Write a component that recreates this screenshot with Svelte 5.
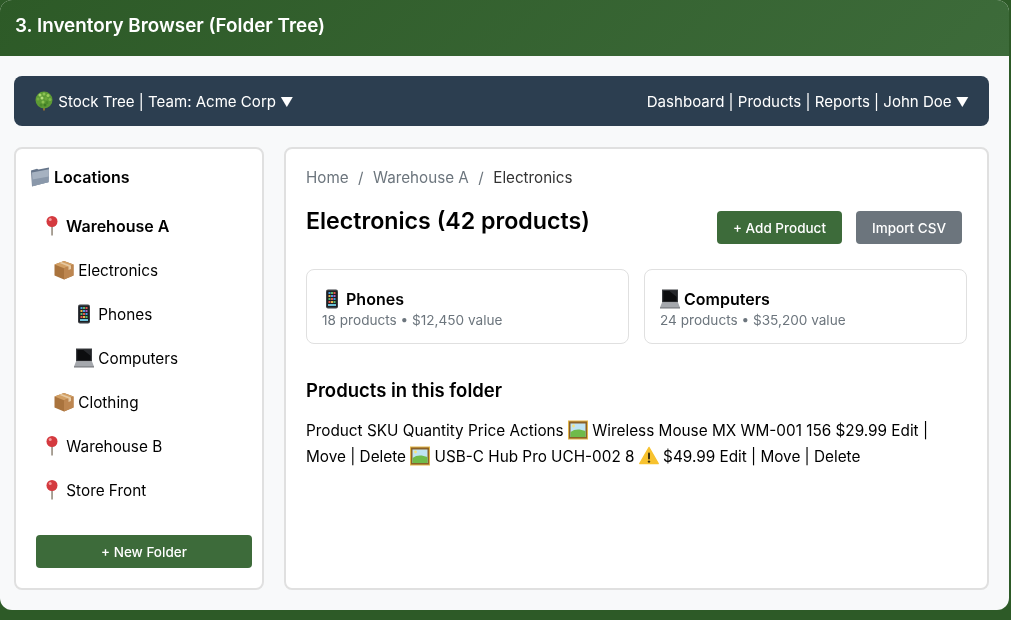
<script>
  const tree = [
    { name: "Warehouse A", icon: "pin", level: 0, active: true },
    { name: "Electronics", icon: "box", level: 1 },
    { name: "Phones", icon: "phone", level: 2 },
    { name: "Computers", icon: "laptop", level: 2 },
    { name: "Clothing", icon: "box", level: 1 },
    { name: "Warehouse B", icon: "pin", level: 0 },
    { name: "Store Front", icon: "pin", level: 0 },
  ];
  const folders = [
    { name: "Phones", icon: "phone", meta: "18 products • $12,450 value" },
    { name: "Computers", icon: "laptop", meta: "24 products • $35,200 value" },
  ];
  const leaves = [
    [6, 4, "#a6d468"], [10, 3, "#8cc152"], [14, 4.5, "#9bcb5c"], [4, 8, "#76b041"], [8, 7, "#b4dc7a"],
    [12, 7.5, "#6fa83d"], [16, 8.5, "#7fb84a"], [5, 11.5, "#5d9a35"], [9, 11, "#8cc152"], [13, 11.5, "#4c8a2b"],
    [16, 11.5, "#5d9a35"], [7, 14, "#4c8a2b"], [11, 14, "#3f7a24"],
  ];
  const apps = [
    [6.5, 3, "#4a9be0"], [9, 3, "#59b96a"], [11.5, 3, "#e2574c"],
    [6.5, 6, "#e9b44c"], [9, 6, "#4a9be0"], [11.5, 6, "#b05fc4"],
    [6.5, 9, "#59b96a"], [9, 9, "#e2574c"], [11.5, 9, "#4a9be0"],
    [6.5, 12, "#e2574c"], [9, 12, "#e9b44c"], [11.5, 12, "#59b96a"],
  ];
</script>

{#snippet emoji(name)}
  <svg class="emoji" viewBox="0 0 20 20" aria-hidden="true">
    {#if name === "tree"}
      <rect x="9.2" y="14" width="1.6" height="5.5" fill="#a8752f" />
      <circle cx="10" cy="9" r="8.5" fill="#5d9a35" />
      {#each leaves as [cx, cy, fill]}
        <circle {cx} {cy} r="1.5" {fill} />
      {/each}
    {:else if name === "folder"}
      <path d="M1 3.5 L7 1.8 L8.5 2.6 L19 0.5 L18.5 15 L2 19.5 Z" fill="#66758a" />
      <path d="M2 5.5 L19 2.2 L18.5 15.2 L2.6 19 Z" fill="#a6b2c1" />
      <path d="M2.3 12.5 L18.8 9.5 L18.5 15.2 L2.6 19 Z" fill="#8a98aa" />
    {:else if name === "pin"}
      <rect x="9.3" y="9" width="1.5" height="10.5" fill="#8f8577" />
      <circle cx="10" cy="5.5" r="5.5" fill="#d43a3f" />
      <circle cx="8.2" cy="3.6" r="1.5" fill="#f59a9c" />
    {:else if name === "box"}
      <path d="M10 1 L19.5 4.5 L19.5 15.5 L10 19.5 L0.5 15.5 L0.5 4.5 Z" fill="#a9733d" />
      <path d="M0.5 4.5 L10 8.2 L19.5 4.5 L10 1 Z" fill="#d29f64" />
      <path d="M10 8.2 L19.5 4.5 L19.5 15.5 L10 19.5 Z" fill="#bd8650" />
      <path d="M5 2.8 L14.5 6.4 L14.5 10 L17 9 L17 5.4 L7.5 1.9 Z" fill="#e6c9a2" />
    {:else if name === "phone"}
      <rect x="4" y="0.5" width="12" height="19" rx="2" fill="#3a3d42" />
      <rect x="5" y="2" width="10" height="16" fill="#1d2025" />
      {#each apps as [x, y, fill]}
        <rect {x} {y} width="2" height="2" {fill} />
      {/each}
      <rect x="6" y="15" width="8" height="2" fill="#6cc0d8" />
    {:else if name === "laptop"}
      <path d="M2 0.5 H18 V13.5 H2 Z" fill="#3a3c40" />
      <path d="M3.2 1.8 H16.8 V12.5 H3.2 Z" fill="#0c0d0f" />
      <path d="M9 1.8 H16.8 V8 Z" fill="#26282c" />
      <path d="M2 13.5 H18 L20 18.5 H0 Z" fill="#a5a8ad" />
      <rect x="0" y="18.2" width="20" height="1.3" fill="#74777c" />
    {:else if name === "picture"}
      <rect x="0" y="0.5" width="20" height="19" fill="#e2b64a" />
      <rect x="1" y="1.5" width="18" height="17" fill="#8a6128" />
      <rect x="2.5" y="3.5" width="15" height="13.5" fill="#bfe4f3" />
      <circle cx="5.5" cy="6" r="1.4" fill="#f8e27a" />
      <path d="M2.5 12 C7 8.5 12 9 17.5 11 V17 H2.5 Z" fill="#6fbb4a" />
    {:else if name === "warning"}
      <path d="M10 1.5 L19.2 17.5 H0.8 Z" fill="#f7c22f" stroke="#f7c22f" stroke-width="1.5" stroke-linejoin="round" />
      <rect x="9" y="6.5" width="2" height="7" rx="1" fill="#3a2f12" />
      <circle cx="10" cy="15.6" r="1.2" fill="#3a2f12" />
    {/if}
  </svg>
{/snippet}

<div class="page">
  <div class="shell">
    <header class="title-bar">3. Inventory Browser (Folder Tree)</header>

    <div class="panel">
      <nav class="navbar">
        <div>{@render emoji("tree")} Stock Tree | Team: Acme Corp <span class="caret">▼</span></div>
        <div>Dashboard | Products | Reports | John Doe <span class="caret">▼</span></div>
      </nav>

      <div class="columns">
        <aside class="sidebar">
          <h3 class="side-title">{@render emoji("folder")} Locations</h3>
          <ul class="tree">
            {#each tree as item}
              <li class="node level-{item.level}" class:active={item.active}>
                {@render emoji(item.icon)} {item.name}
              </li>
            {/each}
          </ul>
          <button class="btn new-folder">+ New Folder</button>
        </aside>

        <main class="content">
          <div class="crumbs">
            <span>Home</span><i>/</i><span>Warehouse A</span><i>/</i><b>Electronics</b>
          </div>

          <div class="heading">
            <h2>Electronics (42 products)</h2>
            <div class="actions">
              <button class="btn">+ Add Product</button>
              <button class="btn grey">Import CSV</button>
            </div>
          </div>

          <div class="cards">
            {#each folders as folder}
              <div class="card">
                <div class="card-name">{@render emoji(folder.icon)} {folder.name}</div>
                <div class="card-meta">{folder.meta}</div>
              </div>
            {/each}
          </div>

          <h3 class="section">Products in this folder</h3>
          <p class="flat">
            Product SKU Quantity Price Actions {@render emoji("picture")} Wireless Mouse MX WM-001 156 $29.99 Edit | Move | Delete {@render emoji("picture")} USB-C Hub Pro UCH-002 8 {@render emoji("warning")} $49.99 Edit | Move | Delete
          </p>
        </main>
      </div>
    </div>
  </div>
</div>

<style>
  :global(body) {
    font-family: Inter, "Liberation Sans", sans-serif;
    font-size: 15.3px;
    color: #000;
  }
  .page {
    height: 620px;
    overflow: hidden;
    background: #2d5a27;
  }
  .shell {
    width: 1009px;
    height: 610px;
    overflow: hidden;
    border-radius: 12px;
    background: #f8f9fa;
    will-change: transform;
  }
  .title-bar {
    height: 56px;
    box-sizing: border-box;
    padding: 14px 15px;
    background: linear-gradient(135deg, #2d5a27 0%, #3d6b3a 100%);
    color: #fff;
    font-size: 18.85px;
    font-weight: 600;
    line-height: 24px;
  }
  .panel {
    box-sizing: border-box;
    padding: 20px 20px 20px 14px;
  }
  .navbar {
    display: flex;
    justify-content: space-between;
    align-items: center;
    height: 50px;
    box-sizing: border-box;
    padding: 0 20px;
    background: #2c3e50;
    border-radius: 8px;
    color: #fff;
    font-size: 15.05px;
  }
  .caret {
    font-size: 13px;
  }
  .emoji {
    display: inline-block;
    width: 20px;
    height: 20px;
    vertical-align: -4px;
  }
  .columns {
    display: flex;
    gap: 20px;
    margin-top: 21px;
    height: 443px;
  }
  .sidebar {
    box-sizing: border-box;
    width: 250px;
    flex: none;
    padding: 14px;
    background: #fff;
    border: 2px solid #e0e0e0;
    border-radius: 8px;
  }
  .side-title {
    margin: 0;
    font-size: 16px;
    font-weight: 600;
    line-height: 28px;
    height: 42px;
  }
  .tree {
    list-style: none;
    margin: 0;
    padding: 0;
  }
  .node {
    height: 44px;
    line-height: 44px;
  }
  .level-0 {
    padding-left: 12px;
  }
  .level-1 {
    padding-left: 24px;
  }
  .level-2 {
    padding-left: 44px;
  }
  .active {
    font-size: 16px;
    font-weight: 600;
    line-height: 42px;
  }
  .btn {
    height: 33px;
    padding: 0 16px;
    border: none;
    border-radius: 4px;
    background: #3d6b3a;
    color: #fff;
    font: 500 13.5px Inter, "Liberation Sans", sans-serif;
  }
  .btn.grey {
    background: #6c757d;
  }
  .new-folder {
    display: block;
    width: 216px;
    margin: 22px 6px 0;
  }
  .content {
    flex: 1;
    box-sizing: border-box;
    padding: 19px 20px;
    background: #fff;
    border: 2px solid #e0e0e0;
    border-radius: 8px;
  }
  .crumbs {
    line-height: 20px;
    color: #6c757d;
    font-size: 15.2px;
  }
  .crumbs i {
    font-style: normal;
    margin: 0 9.5px;
  }
  .crumbs b {
    font-weight: 400;
    color: #333;
  }
  .heading {
    display: flex;
    justify-content: space-between;
    margin-top: 19px;
  }
  h2 {
    margin: 0;
    font-size: 23.2px;
    font-weight: 600;
    line-height: 28px;
  }
  .actions {
    display: flex;
    gap: 14px;
    margin: 4px 5px 0 0;
  }
  .cards {
    display: grid;
    grid-template-columns: 1fr 1fr;
    gap: 15px;
    margin-top: 25px;
  }
  .card {
    height: 75px;
    box-sizing: border-box;
    padding: 17px 15px 15px;
    border: 1px solid #e0e0e0;
    border-radius: 8px;
  }
  .card-name {
    font-size: 16px;
    font-weight: 600;
    line-height: 24px;
  }
  .card-meta {
    font-size: 13.6px;
    line-height: 18px;
    color: #6c757d;
  }
  .section {
    margin: 35px 0 0;
    font-size: 18.5px;
    font-weight: 600;
    line-height: 22px;
  }
  .flat {
    margin: 17px 0 0;
    line-height: 26px;
  }
</style>
